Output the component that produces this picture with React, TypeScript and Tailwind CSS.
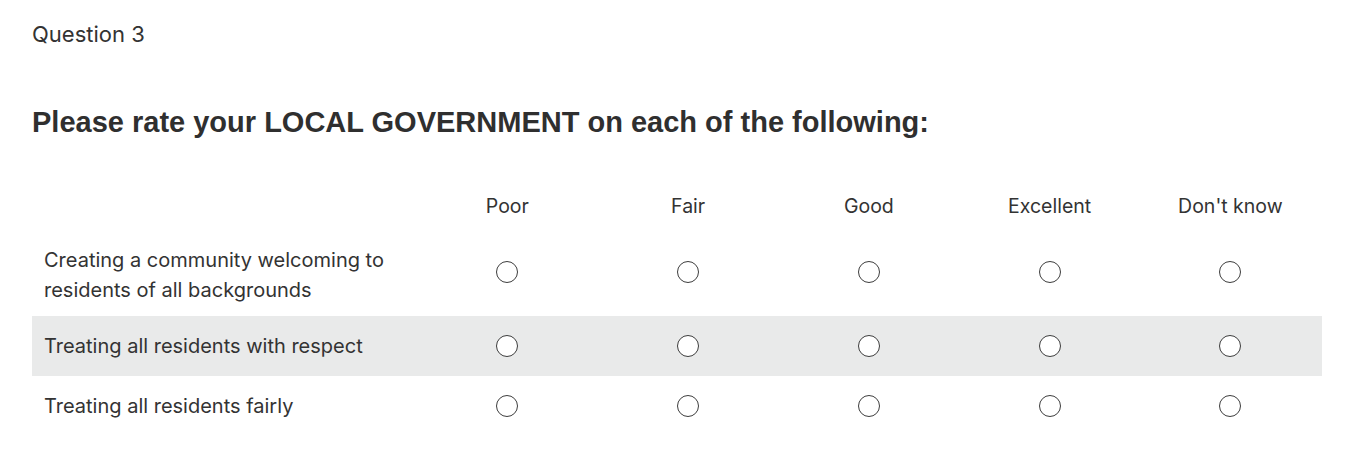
import React from 'react';

const options = ['Poor', 'Fair', 'Good', 'Excellent', "Don't know"];

const items = [
  'Creating a community welcoming to residents of all backgrounds',
  'Treating all residents with respect',
  'Treating all residents fairly',
];

const Radio = () => (
  <span className="block w-[22px] h-[22px] rounded-full border-[1.5px] border-[#3d3d3d] bg-white" />
);

export default function App() {
  return (
    <div className="min-h-screen bg-white text-[#333] font-['Inter',sans-serif] px-[32px] pt-[20px]">
      <p className="text-[22px] leading-[28px]">Question 3</p>
      <h1 className="mt-[56px] text-[29px] leading-[36px] font-bold font-['Liberation_Sans',Arial,sans-serif] text-[#2f2f2f]">
        Please rate your LOCAL GOVERNMENT on each of the following:
      </h1>

      <div className="mt-[41px] w-[1290px]">
        {/* header */}
        <div className="grid grid-cols-[385px_repeat(5,180.75px)] items-center h-[52px]">
          <div />
          {options.map((o) => (
            <div key={o} className="text-center text-[19.5px]">{o}</div>
          ))}
        </div>

        {items.map((item, i) => (
          <div
            key={item}
            className={`grid grid-cols-[385px_repeat(5,180.75px)] items-center ${
              i === 0 ? 'h-[83px]' : 'h-[60px]'
            } ${i === 1 ? 'bg-[#e9eaea]' : ''}`}
          >
            <div className="pl-[12px] pr-[10px] text-[20px] leading-[30px]">{item}</div>
            {options.map((o) => (
              <div key={o} className={`flex justify-center ${i === 0 ? 'pb-[5px]' : ''}`}>
                <Radio />
              </div>
            ))}
          </div>
        ))}
      </div>
    </div>
  );
}
